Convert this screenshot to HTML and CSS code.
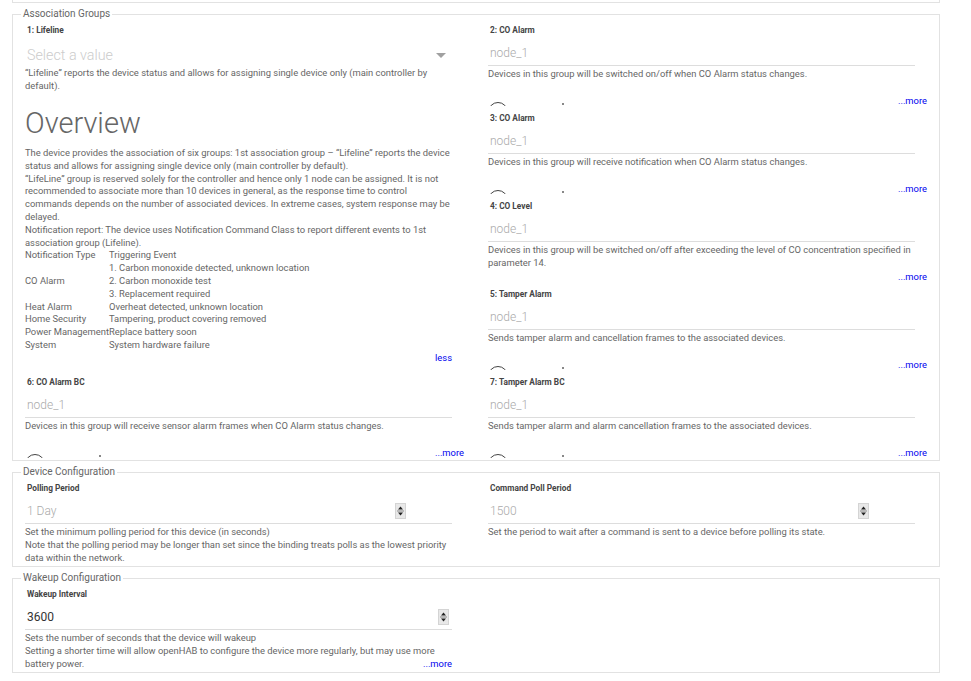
FILE: index.html
```html
<!DOCTYPE html>
<html lang="en">
<head>
    <meta charset="UTF-8">
    <title>Thing Configuration</title>
    <link rel="stylesheet" href="styles.css">
</head>
<body>
    <div class="page">
        <div class="top-box"></div>

        <fieldset class="group">
            <legend>Association Groups</legend>
            <div class="grid assoc">
                <div class="item tall">
                    <div class="label">1: Lifeline</div>
                    <div class="select">Select a value<span class="caret"></span></div>
                    <div class="desc">“Lifeline” reports the device status and allows for assigning single device only (main controller by default).</div>
                    <div class="overview">
                        <h1>Overview</h1>
                        <p>The device provides the association of six groups: 1st association group – “Lifeline” reports the device status and allows for assigning single device only (main controller by default).<br>“LifeLine” group is reserved solely for the controller and hence only 1 node can be assigned. It is not recommended to associate more than 10 devices in general, as the response time to control commands depends on the number of associated devices. In extreme cases, system response may be delayed.<br>Notification report: The device uses Notification Command Class to report different events to 1st association group (Lifeline).</p>
                        <table>
                            <tr><td>Notification Type</td><td>Triggering Event</td></tr>
                            <tr><td></td><td>1. Carbon monoxide detected, unknown location</td></tr>
                            <tr><td>CO Alarm</td><td>2. Carbon monoxide test</td></tr>
                            <tr><td></td><td>3. Replacement required</td></tr>
                            <tr><td>Heat Alarm</td><td>Overheat detected, unknown location</td></tr>
                            <tr><td>Home Security</td><td>Tampering, product covering removed</td></tr>
                            <tr><td>Power Management</td><td>Replace battery soon</td></tr>
                            <tr><td>System</td><td>System hardware failure</td></tr>
                        </table>
                        <a class="toggle" href="#">less</a>
                    </div>
                </div>

                <div class="item">
                    <div class="label">2: CO Alarm</div>
                    <div class="field">node_1</div>
                    <div class="desc">Devices in this group will be switched on/off when CO Alarm status changes.</div>
                    <div class="more-row">
                        <div class="loading"><span class="arc"></span><span class="dot"></span></div>
                        <a href="#">...more</a>
                    </div>
                </div>

                <div class="item">
                    <div class="label">3: CO Alarm</div>
                    <div class="field">node_1</div>
                    <div class="desc">Devices in this group will receive notification when CO Alarm status changes.</div>
                    <div class="more-row">
                        <div class="loading"><span class="arc"></span><span class="dot"></span></div>
                        <a href="#">...more</a>
                    </div>
                </div>

                <div class="item">
                    <div class="label">4: CO Level</div>
                    <div class="field">node_1</div>
                    <div class="desc">Devices in this group will be switched on/off after exceeding the level of CO concentration specified in parameter 14.</div>
                    <div class="more-row">
                        <span></span>
                        <a href="#">...more</a>
                    </div>
                </div>

                <div class="item">
                    <div class="label">5: Tamper Alarm</div>
                    <div class="field">node_1</div>
                    <div class="desc">Sends tamper alarm and cancellation frames to the associated devices.</div>
                    <div class="more-row">
                        <div class="loading"><span class="arc"></span><span class="dot"></span></div>
                        <a href="#">...more</a>
                    </div>
                </div>

                <div class="item">
                    <div class="label">6: CO Alarm BC</div>
                    <div class="field">node_1</div>
                    <div class="desc">Devices in this group will receive sensor alarm frames when CO Alarm status changes.</div>
                    <div class="more-row">
                        <div class="loading"><span class="arc"></span><span class="dot"></span></div>
                        <a href="#">...more</a>
                    </div>
                </div>

                <div class="item">
                    <div class="label">7: Tamper Alarm BC</div>
                    <div class="field">node_1</div>
                    <div class="desc">Sends tamper alarm and alarm cancellation frames to the associated devices.</div>
                    <div class="more-row">
                        <div class="loading"><span class="arc"></span><span class="dot"></span></div>
                        <a href="#">...more</a>
                    </div>
                </div>
            </div>
        </fieldset>

        <fieldset class="group">
            <legend>Device Configuration</legend>
            <div class="grid">
                <div class="item">
                    <div class="label">Polling Period</div>
                    <div class="field number">
                        <span class="value">1 Day</span>
                        <svg class="spin short" width="11" height="16" viewBox="0 0 11 16"><rect x="0.5" y="0.5" width="10" height="15" fill="#e8e8e8" stroke="#d4d4d4"/><path d="M3 6.5h5L5.5 3.5z" fill="#222"/><path d="M2 8h7" stroke="#888"/><path d="M3 9.5h5l-2.5 3z" fill="#222"/></svg>
                    </div>
                    <div class="desc">Set the minimum polling period for this device (in seconds)<br>Note that the polling period may be longer than set since the binding treats polls as the lowest priority data within the network.</div>
                </div>
                <div class="item">
                    <div class="label">Command Poll Period</div>
                    <div class="field number">
                        <span class="value">1500</span>
                        <svg class="spin short" width="11" height="16" viewBox="0 0 11 16"><rect x="0.5" y="0.5" width="10" height="15" fill="#e8e8e8" stroke="#d4d4d4"/><path d="M3 6.5h5L5.5 3.5z" fill="#222"/><path d="M2 8h7" stroke="#888"/><path d="M3 9.5h5l-2.5 3z" fill="#222"/></svg>
                    </div>
                    <div class="desc">Set the period to wait after a command is sent to a device before polling its state.</div>
                </div>
            </div>
        </fieldset>

        <fieldset class="group">
            <legend>Wakeup Configuration</legend>
            <div class="grid">
                <div class="item">
                    <div class="label">Wakeup Interval</div>
                    <div class="field number">
                        <span class="value set">3600</span>
                        <svg class="spin" width="11" height="16" viewBox="0 0 11 16"><rect x="0.5" y="0.5" width="10" height="15" fill="#e8e8e8" stroke="#d4d4d4"/><path d="M3 6.5h5L5.5 3.5z" fill="#222"/><path d="M2 8h7" stroke="#888"/><path d="M3 9.5h5l-2.5 3z" fill="#222"/></svg>
                    </div>
                    <div class="desc">Sets the number of seconds that the device will wakeup<br>Setting a shorter time will allow openHAB to configure the device more regularly, but may use more battery power.<a class="inline-more" href="#">...more</a></div>
                </div>
            </div>
        </fieldset>
    </div>
</body>
</html>
```

FILE: styles.css
```css
body {
    margin: 0;
    font-family: Roboto, "Liberation Sans", sans-serif;
    color: #666;
    background: #fff;
}
a {
    color: #00e;
    text-decoration: none;
}
.page {
    width: 928px;
    margin-left: 12px;
}
.top-box {
    height: 2px;
    border: 1px solid #e2e2e2;
    border-top: none;
}
.group {
    margin: 5px 0 0;
    padding: 0 0 2px;
    border: 1px solid #e2e2e2;
    min-width: 0;
}
.group legend {
    margin-left: 8px;
    padding: 0 2px;
    font-size: 10px;
    line-height: 12px;
    color: #666;
}
.grid {
    display: grid;
    grid-template-columns: 1fr 1fr;
}
.assoc {
    grid-auto-rows: 88px;
    margin-bottom: -2px;
}
.item {
    padding: 0 12px;
    min-width: 0;
    overflow: hidden;
}
.item.tall {
    grid-row: span 4;
}
.label {
    padding: 6px 0 0 2px;
    font-size: 8.3px;
    line-height: 9px;
    font-weight: bold;
    color: #444;
}
.field {
    width: calc(100% - 14px);
    height: 16px;
    padding: 10px 0 4px 2px;
    border-bottom: 1px solid #ddd;
    font-size: 12px;
    line-height: 16px;
    font-weight: 300;
    color: #aaa;
}
.select {
    display: flex;
    align-items: center;
    width: calc(100% - 14px);
    height: 18px;
    padding: 11px 0 1px 2px;
    font-size: 14.3px;
    line-height: 18px;
    font-weight: 300;
    color: #ccc;
}
.caret {
    margin-left: auto;
    margin-right: 6px;
    border-left: 5px solid transparent;
    border-right: 5px solid transparent;
    border-top: 5px solid #a0a0a0;
}
.number {
    display: flex;
    align-items: center;
}
.number .value {
    flex: 1;
}
.number .value.set {
    color: #333;
    font-weight: normal;
}
.spin {
    margin-right: 3px;
}
.spin.short {
    margin-right: 46px;
}
.desc {
    width: calc(100% - 12px);
    min-height: 26px;
    padding-top: 1px;
    font-size: 9.4px;
    line-height: 13px;
    color: #666;
}
.inline-more {
    float: right;
}
.more-row {
    display: flex;
    justify-content: space-between;
    align-items: flex-start;
    height: 15px;
    font-size: 9.4px;
    line-height: 15px;
}
.loading {
    display: flex;
    width: 80px;
    height: 4px;
    margin-top: 9px;
    overflow: hidden;
}
.arc {
    flex: none;
    width: 20px;
    height: 20px;
    box-sizing: border-box;
    border: 1.5px solid #444;
    border-radius: 50%;
}
.dot {
    flex: none;
    width: 2px;
    height: 2px;
    margin: 1px 0 0 54px;
    background: #888;
}
.overview {
    width: calc(100% - 12px);
    font-size: 9.4px;
    line-height: 12.8px;
    color: #666;
}
.overview h1 {
    margin: 15px 0 8px;
    font-size: 29px;
    line-height: 32px;
    font-weight: 300;
    color: #666;
}
.overview p {
    margin: 0;
    padding-right: 2px;
}
.overview table {
    border-collapse: collapse;
    font-size: 9.4px;
    line-height: 12.8px;
    color: #666;
}
.overview td {
    padding: 0;
    vertical-align: top;
    white-space: nowrap;
}
.toggle {
    display: block;
    text-align: right;
    line-height: 12px;
}
```
